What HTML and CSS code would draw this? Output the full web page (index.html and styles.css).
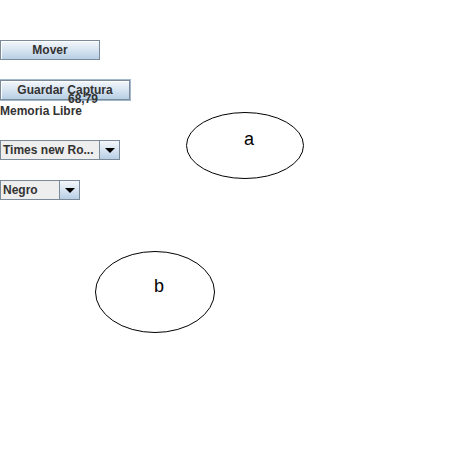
FILE: index.html
```html
<!DOCTYPE html>
<html>
<head>
<meta charset="utf-8">
<link rel="stylesheet" href="styles.css">
</head>
<body>
<div class="frame">
  <div class="controls">
    <button class="btn btn-mover">Mover</button>
    <div class="capture">
      <button class="btn btn-capture">Guardar Captura</button>
      <span class="free-value">68,79</span>
    </div>
    <div class="label">Memoria Libre</div>
    <div class="combo combo-font">
      <span class="combo-text">Times new Ro...</span>
      <span class="combo-arrow"><svg width="10" height="5" viewBox="0 0 10 5"><polygon points="0,0 10,0 5,5" fill="#000"/></svg></span>
    </div>
    <div class="combo combo-color">
      <span class="combo-text">Negro</span>
      <span class="combo-arrow"><svg width="10" height="5" viewBox="0 0 10 5"><polygon points="0,0 10,0 5,5" fill="#000"/></svg></span>
    </div>
  </div>
  <svg class="canvas" width="474" height="451" viewBox="0 0 474 451">
    <ellipse cx="245" cy="145.5" rx="58.5" ry="33" fill="none" stroke="#000" stroke-width="1"/>
    <text x="249" y="145" class="node-label" text-anchor="middle">a</text>
    <ellipse cx="155" cy="292" rx="59.5" ry="40.5" fill="none" stroke="#000" stroke-width="1"/>
    <text x="159" y="292" class="node-label" text-anchor="middle">b</text>
  </svg>
</div>
</body>
</html>
```
FILE: styles.css
```css
html, body {
  margin: 0;
  padding: 0;
  background: #fff;
}
.frame {
  position: relative;
  width: 474px;
  height: 451px;
  font-family: "Liberation Sans", Arial, sans-serif;
  font-weight: bold;
  font-size: 12px;
  color: #333;
}
.controls {
  display: flex;
  flex-direction: column;
  align-items: flex-start;
  padding-top: 40px;
}
.btn {
  box-sizing: border-box;
  height: 20px;
  margin: 0;
  padding: 0;
  border: 1px solid #7a8a99;
  background: linear-gradient(#f3f7fb, #dde8f3 40%, #b8cfe5);
  box-shadow: inset 1px 1px 0 #fff;
  font: inherit;
  color: #333;
  display: flex;
  align-items: center;
  justify-content: center;
}
.btn-mover {
  width: 100px;
}
.capture {
  position: relative;
  margin-top: 20px;
}
.btn-capture {
  width: 130px;
  outline: 1px solid #a3b8cc;
}
.free-value {
  position: absolute;
  left: 68px;
  top: 12px;
}
.label {
  margin-top: 4px;
  line-height: 14px;
}
.combo {
  box-sizing: border-box;
  height: 20px;
  border: 1px solid #7a8a99;
  background: #eee;
  display: flex;
  align-items: stretch;
}
.combo-font {
  width: 120px;
  margin-top: 22px;
}
.combo-color {
  width: 80px;
  margin-top: 20px;
}
.combo-text {
  flex: 1;
  padding-left: 2px;
  display: flex;
  align-items: center;
  white-space: nowrap;
  overflow: hidden;
}
.combo-arrow {
  width: 19px;
  border-left: 1px solid #7a8a99;
  background: linear-gradient(#f3f7fb, #dde8f3 40%, #b8cfe5);
  display: flex;
  align-items: center;
  justify-content: center;
}
.canvas {
  position: absolute;
  left: 0;
  top: 0;
  pointer-events: none;
}
.node-label {
  font-family: "Liberation Sans", Arial, sans-serif;
  font-weight: normal;
  font-size: 18px;
  fill: #000;
}
```
